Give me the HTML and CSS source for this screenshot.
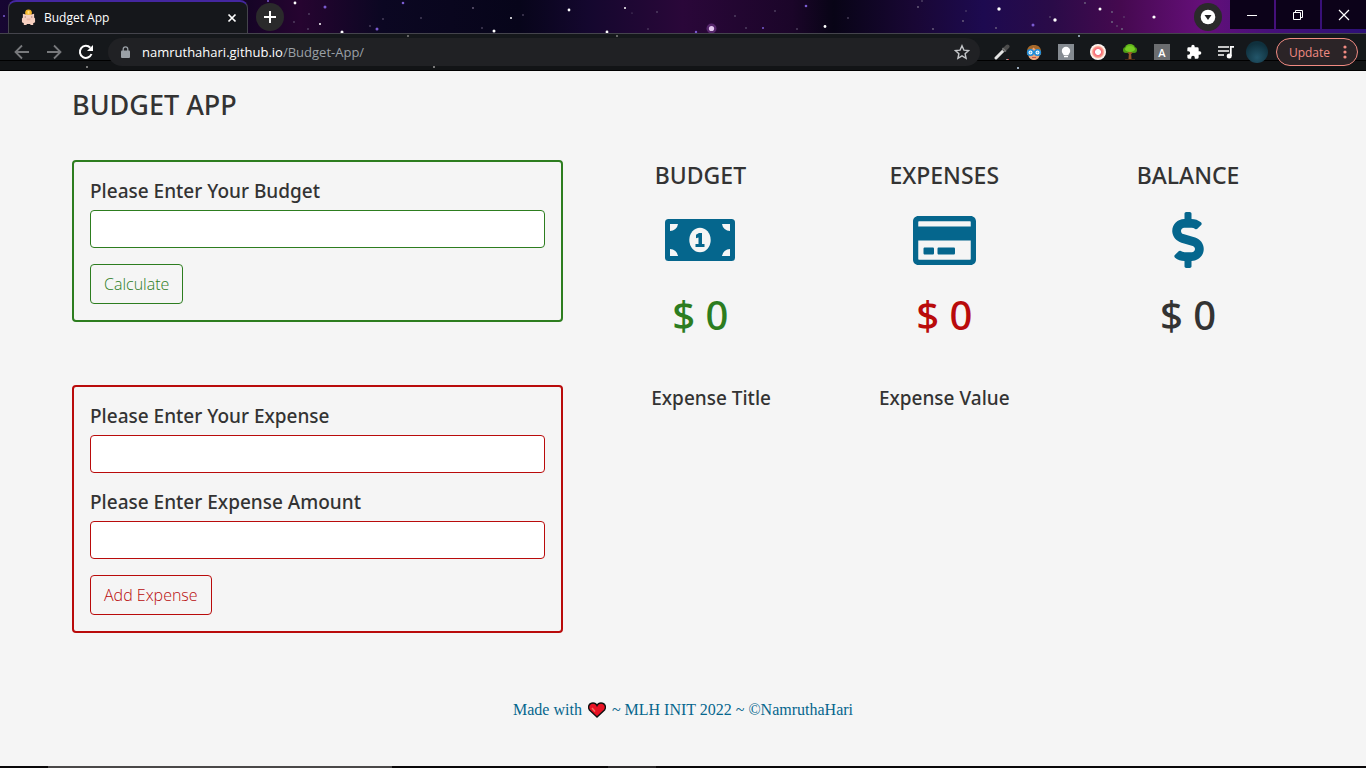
FILE: index.html
```html
<!DOCTYPE html>
<html lang="en">
<head>
<meta charset="utf-8">
<meta name="viewport" content="width=device-width, initial-scale=1">
<title>Budget App</title>
<link rel="stylesheet" href="styles.css">
</head>
<body>
<header class="browser">
  <svg class="stars" aria-hidden="true">
    <g fill="#7a5bd0"><circle cx="4" cy="16" r="1"/><circle cx="325" cy="7" r="1.5"/><circle cx="377" cy="29" r="1.5"/><circle cx="403" cy="3" r="1.3"/><circle cx="696" cy="32" r="1.2"/><circle cx="806" cy="6" r="1.3"/><circle cx="1033" cy="25" r="1.5"/><circle cx="763" cy="28" r="1"/><circle cx="268" cy="1" r="1"/></g>
    <g fill="#fff"><circle cx="295" cy="3" r="1.4"/><circle cx="342" cy="32" r="1.5"/><circle cx="320" cy="24" r="1"/><circle cx="494" cy="31" r="1.5"/><circle cx="569" cy="10" r="1.4"/><circle cx="607" cy="32" r="1.4"/><circle cx="711.5" cy="28.5" r="2.6"/><circle cx="825" cy="26.5" r="1.4"/><circle cx="999" cy="9" r="1.7"/><circle cx="1055" cy="20" r="1.7"/><circle cx="1100" cy="9" r="1.5"/><circle cx="1154" cy="17" r="1.6"/><circle cx="511" cy="18" r="1"/><circle cx="625" cy="8" r="1"/></g>
    <circle cx="711.5" cy="28.5" r="5" fill="#b060d0" opacity=".35"/>
    <g fill="#6f6580"><circle cx="309" cy="14" r=".8"/><circle cx="294" cy="22" r=".8"/><circle cx="308" cy="29" r=".8"/><circle cx="370" cy="26" r=".8"/><circle cx="383" cy="19" r=".8"/><circle cx="421" cy="18" r=".8"/><circle cx="473" cy="8" r=".9"/><circle cx="523" cy="15" r=".8"/><circle cx="482" cy="28" r=".8"/><circle cx="632" cy="13" r=".6"/><circle cx="657" cy="12" r=".8"/><circle cx="648" cy="29" r=".7"/><circle cx="735" cy="16" r=".8"/><circle cx="746" cy="28" r=".8"/><circle cx="775" cy="11" r=".8"/><circle cx="797" cy="29" r=".8"/><circle cx="848" cy="18" r=".8"/><circle cx="918" cy="7" r=".9"/><circle cx="922" cy="1" r=".8"/><circle cx="933" cy="29" r=".9"/><circle cx="963" cy="21" r=".9"/><circle cx="966" cy="11" r=".7"/><circle cx="996" cy="28" r=".9"/><circle cx="1050" cy="17" r=".8"/><circle cx="1085" cy="3" r=".9"/><circle cx="1112" cy="12" r=".9"/><circle cx="1112" cy="22" r="1"/><circle cx="1117" cy="26" r=".8"/><circle cx="1122" cy="29" r="1"/><circle cx="1124" cy="17" r=".7"/></g>
  </svg>
  <div class="tabstrip">
    <div class="tab">
      <svg class="favicon" viewBox="0 0 16 18" aria-hidden="true"><circle cx="8" cy="4" r="3.6" fill="#f5b62a"/><path d="M7 2h2v3H7z" fill="#ffe08a"/><path d="M2 5l4 1h4l4-1v4l1 1v4l-2 1v2h-3v-1H6v1H3v-2l-2-1v-4l1-1z" fill="#f6cfc0"/><path d="M6 10h4v2H6z" fill="#eab5a6"/><path d="M4 8h1v1H4zM11 8h1v1h-1z" fill="#8a5b50"/></svg>
      <span class="tab-title">Budget App</span>
      <button class="tab-close" aria-label="Close tab"><svg width="10" height="10" viewBox="0 0 10 10"><path d="M1.500 1.500l7 7M8.500 1.500l-7 7" stroke="#fff" stroke-width="1.700"/></svg></button>
    </div>
    <button class="round-btn" aria-label="New tab"><svg width="14" height="14" viewBox="0 0 14 14"><path d="M7 1v12M1 7h12" stroke="#fff" stroke-width="2"/></svg></button>
    <div class="window-area">
      <button class="round-btn" aria-label="Search tabs"><svg width="16" height="16" viewBox="0 0 16 16"><circle cx="8" cy="8" r="7.300" fill="#fff"/><path d="M4.500 6h7L8 11z" fill="#202124"/></svg></button>
      <div class="window-buttons">
        <button aria-label="Minimize"><svg width="12" height="12" viewBox="0 0 12 12"><path d="M1 6.500h10" stroke="#fff"/></svg></button>
        <button aria-label="Restore"><svg width="12" height="12" viewBox="0 0 12 12"><path d="M1.500 3.500h7v7h-7zM3.500 3.500v-2h7v7h-2" fill="none" stroke="#fff"/></svg></button>
        <button aria-label="Close"><svg width="12" height="12" viewBox="0 0 12 12"><path d="M1 1l10 10M11 1L1 11" stroke="#fff" stroke-width="1.200"/></svg></button>
      </div>
    </div>
  </div>
  <div class="toolbar">
    <nav class="nav-buttons">
      <button aria-label="Back"><svg width="16" height="16" viewBox="0 0 16 16"><path d="M15 8H2M8 1.500L1.500 8 8 14.500" fill="none" stroke="#77797c" stroke-width="1.800"/></svg></button>
      <button aria-label="Forward"><svg width="16" height="16" viewBox="0 0 16 16"><path d="M1 8h13M8 1.500L14.500 8 8 14.500" fill="none" stroke="#77797c" stroke-width="1.800"/></svg></button>
      <button aria-label="Reload"><svg width="16" height="16" viewBox="0 0 16 16"><path d="M13.500 10A6 6 0 1 1 12.300 3.800" fill="none" stroke="#fff" stroke-width="2"/><path d="M15 1v6H9z" fill="#fff"/></svg></button>
    </nav>
    <div class="address">
      <svg width="9" height="12" viewBox="0 0 9 12" aria-hidden="true"><path d="M2.200 5V3.200a2.300 2.300 0 0 1 4.600 0V5" fill="none" stroke="#9aa0a6" stroke-width="1.300"/><rect x="0" y="4.500" width="9" height="7.500" rx="1" fill="#9aa0a6"/></svg>
      <span class="url">namruthahari.github.io<span class="path">/Budget-App/</span></span>
      <button class="bookmark" aria-label="Bookmark this tab"><svg width="16" height="16" viewBox="0 0 16 16"><path d="M8 1.800l1.900 4.300 4.700.5-3.500 3.100 1 4.600L8 11.900l-4.100 2.400 1-4.600L1.400 6.600l4.700-.5z" fill="none" stroke="#c4c6c9" stroke-width="1.400"/></svg></button>
    </div>
    <div class="extensions">
      <button aria-label="Colour picker"><svg width="16" height="16" viewBox="0 0 16 16"><path d="M2 14L10 6" stroke="#e4e4e4" stroke-width="3" stroke-linecap="round"/><path d="M10.500 5.500l3-3" stroke="#4c4c4c" stroke-width="4" stroke-linecap="round"/><path d="M8.500 4l3.500 3.500" stroke="#777" stroke-width="1.500"/><path d="M13.500 15.500h1.500" stroke="#d33"/><path d="M12.500 15.500h1" stroke="#fff"/></svg></button>
      <button aria-label="Reader"><svg width="16" height="16" viewBox="0 0 16 16"><path d="M1 11C0 3 4 1 8 1s8 2 7 10z" fill="#a5682a"/><path d="M2.500 6.500C5 6 6.500 5 7.500 3.500 9 5.500 11 6.300 13.500 6.500V11c0 3.500-3 5-5.500 5s-5.500-1.500-5.500-5z" fill="#eba77c"/><circle cx="4.500" cy="8.500" r="2.800" fill="#fff" stroke="#1a8ad8" stroke-width="1.600"/><circle cx="11.500" cy="8.500" r="2.800" fill="#fff" stroke="#1a8ad8" stroke-width="1.600"/><circle cx="4.500" cy="8.500" r="1" fill="#5ab4e8"/><circle cx="11.500" cy="8.500" r="1" fill="#5ab4e8"/><path d="M6 13.500h4" stroke="#c4564a"/></svg></button>
      <button aria-label="Lightbulb"><svg width="16" height="16" viewBox="0 0 16 16"><path d="M0 0h16v16H0z" fill="#858b91"/><circle cx="8" cy="7" r="4.200" fill="#fff"/><path d="M5.500 9h5v2.300h-5zM6 12h4v1.300H6z" fill="#fff"/></svg></button>
      <button aria-label="Recorder"><svg width="16" height="16" viewBox="0 0 16 16"><defs><radialGradient id="ring"><stop offset=".32" stop-color="#fff"/><stop offset=".42" stop-color="#f7677c"/><stop offset=".65" stop-color="#fa9a86"/><stop offset=".82" stop-color="#ffeae2"/><stop offset="1" stop-color="#fff"/></radialGradient></defs><circle cx="8" cy="8" r="8" fill="url(#ring)"/></svg></button>
      <button aria-label="Tree"><svg width="16" height="16" viewBox="0 0 16 16"><path d="M7 8h2l.5 7h-3z" fill="#9b5b28"/><path d="M8 10l4-3M8 10L4 7" stroke="#9b5b28" stroke-width="1.500"/><ellipse cx="8" cy="4" rx="5" ry="4" fill="#62b51b"/><circle cx="4" cy="6" r="3" fill="#4e9c14"/><circle cx="12" cy="6" r="3" fill="#4e9c14"/><ellipse cx="8" cy="5" rx="5" ry="3" fill="#78cc25"/><path d="M3 15.500h10" stroke="#4a2a14"/></svg></button>
      <button class="letter" aria-label="Dictionary">A</button>
      <button aria-label="Extensions"><svg width="16" height="16" viewBox="0 0 24 24"><path d="M20.500 11H19V7a2 2 0 0 0-2-2h-4V3.500a2.500 2.500 0 0 0-5 0V5H4a2 2 0 0 0-2 2v3.800h1.500a2.700 2.700 0 0 1 0 5.400H2V20a2 2 0 0 0 2 2h3.800v-1.500a2.700 2.700 0 0 1 5.400 0V22H17a2 2 0 0 0 2-2v-4h1.500a2.500 2.500 0 0 0 0-5z" fill="#fff"/></svg></button>
      <button aria-label="Media controls"><svg width="16" height="16" viewBox="0 0 16 16"><path d="M0 3h11M0 7h11M0 11h6" stroke="#fff" stroke-width="1.600"/><path d="M12.800 12V2.800H16" fill="none" stroke="#fff" stroke-width="1.800"/><circle cx="11.200" cy="12" r="2.500" fill="#fff"/></svg></button>
    </div>
    <button class="avatar" aria-label="Profile"></button>
    <button class="update">Update<svg width="4" height="14" viewBox="0 0 4 14" aria-hidden="true"><g fill="#f28b82"><circle cx="2" cy="2" r="1.600"/><circle cx="2" cy="7" r="1.600"/><circle cx="2" cy="12" r="1.600"/></g></svg></button>
  </div>
</header>

<main class="page">
  <h1 class="title">BUDGET APP</h1>
  <div class="row">
    <form class="panel green">
      <label for="budget">Please Enter Your Budget</label>
      <input id="budget" type="text">
      <button type="button">Calculate</button>
    </form>
    <section class="stats">
      <div class="stat">
        <h2>BUDGET</h2>
        <div class="stat-icon"><svg width="70" height="42" viewBox="0 0 70 42" aria-hidden="true"><rect width="70" height="42" rx="3.500" fill="#05668d"/><path d="M5 5h8a8 8 0 0 1-8 7zM65 5h-8a8 8 0 0 0 8 7zM5 37h8a8 8 0 0 0-8-7zM65 37h-8a8 8 0 0 1 8-7z" fill="#f5f5f5"/><ellipse cx="35" cy="21" rx="10.700" ry="12.200" fill="#f5f5f5"/><path d="M34 14h3v11h2.500v3h-9v-3H33.500v-6.500l-2.500.8v-3.500z" fill="#05668d"/></svg></div>
        <p class="amount green-text">$ 0</p>
      </div>
      <div class="stat">
        <h2>EXPENSES</h2>
        <div class="stat-icon"><svg width="63" height="49" viewBox="0 0 576 448" aria-hidden="true"><path fill="#05668d" fill-rule="evenodd" d="M48 0h480c26 0 48 22 48 48v352c0 26-22 48-48 48H48c-26 0-48-22-48-48V48C0 22 22 0 48 0zM54 48c-3 0-6 3-6 6v42h480V54c0-3-3-6-6-6zM48 224v170c0 3 3 6 6 6h468c3 0 6-3 6-6V224zM108 288h72c7 0 12 5 12 12v40c0 7-5 12-12 12h-72c-7 0-12-5-12-12v-40c0-7 5-12 12-12zM236 288h136c7 0 12 5 12 12v40c0 7-5 12-12 12H236c-7 0-12-5-12-12v-40c0-7 5-12 12-12z"/></svg></div>
        <p class="amount red-text">$ 0</p>
      </div>
      <div class="stat">
        <h2>BALANCE</h2>
        <div class="stat-icon"><svg width="32" height="56" viewBox="0 0 288 512" aria-hidden="true"><path fill="#05668d" d="M209.200 233.400l-108-31.600C88.700 198.200 80 186.500 80 173.500c0-16.300 13.200-29.500 29.500-29.500h66.300c12.200 0 24.200 3.700 34.200 10.500 6.100 4.100 14.300 3.100 19.500-2l34.800-34c7.100-6.900 6.100-18.400-1.800-24.500C238 74.800 207.400 64.100 176 64V16c0-8.800-7.200-16-16-16h-32c-8.800 0-16 7.200-16 16v48h-2.500C45.800 64-5.400 118.700.5 183.600c4.200 46.100 39.400 83.600 83.800 96.600l102.500 30c12.500 3.700 21.200 15.300 21.200 28.300 0 16.300-13.200 29.500-29.500 29.500h-66.300C100 368 88 364.300 78 357.500c-6.100-4.100-14.300-3.100-19.500 2l-34.800 34c-7.100 6.900-6.100 18.400 1.800 24.500 24.500 19.200 55.100 29.900 86.500 30v48c0 8.800 7.200 16 16 16h32c8.800 0 16-7.200 16-16v-48.200c46.600-.9 90.300-28.600 105.700-72.700 21.500-61.600-14.600-124.800-72.500-141.700z"/></svg></div>
        <p class="amount">$ 0</p>
      </div>
    </section>
  </div>
  <div class="row">
    <form class="panel red">
      <label for="expense">Please Enter Your Expense</label>
      <input id="expense" type="text">
      <label for="amount">Please Enter Expense Amount</label>
      <input id="amount" type="text">
      <button type="button">Add Expense</button>
    </form>
    <section class="list">
      <table>
        <thead><tr><th scope="col">Expense Title</th><th scope="col">Expense Value</th><td></td></tr></thead>
      </table>
    </section>
  </div>
</main>
<footer class="footer">
  <span>Made with</span>
  <svg width="18" height="16" viewBox="0 0 18 16" role="img" aria-label="love"><path d="M9 15L1.500 8C-.5 5 1 1 5 1c2 0 3.300 1 4 2.500C9.700 2 11 1 13 1c4 0 5.500 4 3.500 7z" fill="#e81224" stroke="#111" stroke-width="1.400"/><path d="M4 6l3 3.500" stroke="#f4735f" stroke-width="1.400"/></svg>
  <span>~ MLH INIT 2022 ~ ©NamruthaHari</span>
</footer>
<div class="taskbar"><span class="task wide"></span><span class="task narrow"></span></div>
</body>
</html>
```
FILE: styles.css
```css
* { box-sizing: border-box; }
body {
  margin: 0;
  min-height: 100vh;
  display: flex;
  flex-direction: column;
  background: #f5f5f5;
  color: #333;
  font-family: "Open Sans", "Noto Sans", sans-serif;
}
button { font: inherit; cursor: pointer; }

/* Browser frame */
.browser {
  position: relative;
  font-size: 12px;
  color: #fff;
  background: linear-gradient(90deg, #170632 0, #0c0420 16%, #260430 22%, #0b0722 28%, #07051a 38%, #14072e 43%, #2a0739 50%, #1b0529 58%, #080416 61%, #190735 67%, #1d0a50 72%, #2a0b48 77%, #45094f 82%, #650f79 88%, #46107a 93%, #2c1076 100%);
}
.browser button {
  display: flex;
  align-items: center;
  justify-content: center;
  padding: 0;
  border: 0;
  background: none;
  color: inherit;
}
.stars { position: absolute; inset: 0; width: 100%; height: 33px; }
.tabstrip { position: relative; display: flex; height: 33px; padding-left: 8px; gap: 8px; }
.tab {
  display: flex;
  align-items: center;
  gap: 8px;
  width: 240px;
  padding: 0 10px 0 12px;
  background: #15171b;
  border: 1px solid #44444c;
  border-top: 2px solid #4427a0;
  border-bottom: 0;
  border-radius: 8px 8px 0 0;
}
.favicon { width: 15px; height: 17px; }
.tab-title { flex: 1; }
.round-btn { width: 28px; height: 28px; }
.browser .round-btn { background: #2a2a2b; border-radius: 50%; margin-top: 3px; }
.window-area { display: flex; margin-left: auto; gap: 8px; }
.window-buttons { display: flex; gap: 2px; height: 29px; }
.window-buttons button { width: 44px; background: #0c0219; }
.toolbar {
  position: relative;
  display: flex;
  align-items: center;
  height: 38px;
  padding: 0 8px 0 14px;
  border-top: 1px solid #44444c;
  border-bottom: 1px solid #000;
  background:
    radial-gradient(circle at 87px 33px, #777 1px, transparent 1px),
    radial-gradient(circle at 408px 2px, #666 1px, transparent 1px),
    radial-gradient(circle at 617px 2px, #666 1px, transparent 1px),
    radial-gradient(circle at 1018px 34px, #9ab 1px, transparent 1px),
    radial-gradient(circle at 1079px 2px, #89a 1px, transparent 1px),
    radial-gradient(circle at 434px 33px, #777 1px, transparent 1px),
    linear-gradient(#15181b 0 26px, #000 26px 27px, #121416 27px);
}
.nav-buttons { display: flex; gap: 16px; margin-right: 14px; }
.address {
  display: flex;
  flex: 1;
  align-items: center;
  gap: 12px;
  height: 28px;
  padding: 0 10px 0 13px;
  border-radius: 14px;
  background: #202124;
  font-size: 13px;
}
.url { flex: 1; }
.path { color: #9aa0a6; }
.extensions { display: flex; gap: 16px; margin: 0 12px 0 14px; }
.extensions button { width: 16px; height: 16px; }
.browser .letter { background: #6b6d70; font-size: 11px; font-weight: 600; }
.browser .avatar {
  width: 22px;
  height: 22px;
  margin-right: 8px;
  border-radius: 50%;
  background: radial-gradient(circle at 50% 75%, #23566a, #0f303d 70%);
}
.browser .update {
  width: 82px;
  height: 28px;
  gap: 13px;
  padding-left: 2px;
  border: 1px solid #f28b82;
  border-radius: 14px;
  background: #2b2427;
  color: #f28b82;
}

/* Budget page */
.page { width: 100%; padding: 16px 56px 20px; }
.title, .stat h2, .amount, .panel label, .list th {
  font-family: "Noto Sans", "Open Sans", sans-serif;
  font-weight: 500;
}
.title { margin: 0 16px 37px; font-size: 27px; line-height: 36px; }
.row { display: grid; grid-template-columns: 5fr 7fr; align-items: start; margin-bottom: 45px; }
.panel {
  display: flex;
  flex-direction: column;
  align-items: flex-start;
  margin: 0 16px;
  padding: 16px;
  border: 2px solid var(--tone);
  border-radius: 4px;
}
.green { --tone: #2d7d1f; }
.red { --tone: #b90b0b; }
.green-text { color: #2d7d1f; }
.red-text { color: #b90b0b; }
.panel label { margin-bottom: 6px; font-size: 19px; line-height: 26px; }
.panel input {
  width: 100%;
  height: 38px;
  margin-bottom: 16px;
  padding: 6px 12px;
  border: 1px solid var(--tone);
  border-radius: 4px;
  background: #fff;
  font: inherit;
}
.panel button {
  height: 40px;
  padding: 0 13px;
  border: 1px solid var(--tone);
  border-radius: 4px;
  background: transparent;
  color: var(--tone);
  font-size: 16px;
  font-weight: 300;
}
.stats { display: grid; grid-template-columns: repeat(3, 1fr); text-align: center; }
.stat h2 { margin: 0 0 16px; font-size: 23px; line-height: 30px; }
.stat-icon { display: flex; align-items: center; justify-content: center; height: 68px; }
.amount { margin: 16px 0 0; font-size: 40px; line-height: 50px; }
.list { padding: 0 16px; }
.list table { width: 100%; table-layout: fixed; border-collapse: collapse; }
.list th { padding: 0; font-size: 19px; line-height: 26px; }
.footer {
  display: flex;
  justify-content: center;
  align-items: center;
  gap: 6px;
  font-family: "Liberation Serif", serif;
  font-size: 16px;
  line-height: 24px;
  color: #05668d;
}
.taskbar { display: flex; height: 2px; margin-top: auto; padding-left: 48px; background: #0a0809; }
.task { background: #4a4848; }
.wide { width: 344px; }
.narrow { width: 48px; margin-left: 216px; background: #2c2a2b; }
```
